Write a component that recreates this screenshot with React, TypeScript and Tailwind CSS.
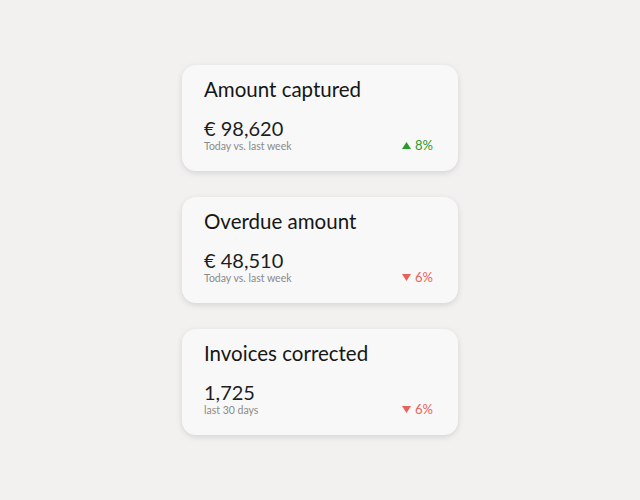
const stats = [
  { title: "Amount captured", value: "€ 98,620", sub: "Today vs. last week", change: "8%", up: true },
  { title: "Overdue amount", value: "€ 48,510", sub: "Today vs. last week", change: "6%", up: false },
  { title: "Invoices corrected", value: "1,725", sub: "last 30 days", change: "6%", up: false },
];

const StatCard = ({ title, value, sub, change, up }: (typeof stats)[number]) => (
  <div className="w-[276px] h-[106px] rounded-[14px] bg-[#f8f8f8] shadow-[0_2px_6px_rgba(0,0,0,0.12)] pl-[22px] pr-[25px] pt-[10px]">
    <h2 className="text-[20.5px] leading-[28px] text-[#161616]">{title}</h2>
    <div className="mt-[13px] flex items-end justify-between">
      <div>
        <p className="text-[20px] leading-[24px] text-[#1e1e1e]">{value}</p>
        <p className="text-[10.5px] leading-[13px] text-[#8a8a8a]">{sub}</p>
      </div>
      <div className={`flex items-center gap-[4px] text-[13px] leading-[16px] ${up ? "text-[#2a9a2a]" : "text-[#e8625c]"}`}>
        <svg width="9" height="7" viewBox="0 0 9 7" className="fill-current">
          {up ? <path d="M4.5 0L9 7H0z" /> : <path d="M0 0h9L4.5 7z" />}
        </svg>
        <span>{change}</span>
      </div>
    </div>
  </div>
);

export default function App() {
  return (
    <div className="w-[640px] h-[500px] bg-[#f2f1f0] flex flex-col items-center justify-center gap-[26px] font-['Lato',sans-serif]">
      {stats.map((s) => (
        <StatCard key={s.title} {...s} />
      ))}
    </div>
  );
}
